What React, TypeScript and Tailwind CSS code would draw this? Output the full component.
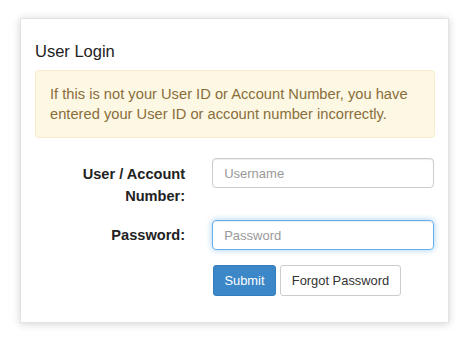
export default function App() {
  return (
    <div className="w-[474px] h-[338px] bg-white pt-[18px] pl-[20px] font-['Liberation_Sans',Arial,sans-serif]">
      <div className="w-[429px] h-[305px] bg-white border border-[#e3e3e3] shadow-[0_1px_8px_rgba(0,0,0,0.18)] px-[14px] pt-[22px]">
        <h3 className="text-[16.5px] leading-[20px] text-[#222]">User Login</h3>
        <div className="mt-[9px] w-[400px] bg-[#fcf8e3] border border-[#faebcc] rounded-[4px] px-[14px] py-[13px] text-[14.7px] leading-[20px] text-[#8a6d3b]">
          If this is not your User ID or Account Number, you have entered your User ID or account number incorrectly.
        </div>
        <div className="mt-[20px] flex flex-col text-[14.6px]">
          <div className="flex items-start">
            <label className="w-[151px] text-right font-bold leading-[22px] text-[#222] pt-[5px]">
              User / Account
              <br />
              Number:
            </label>
            <input
              className="ml-[27px] w-[223px] h-[30px] border border-[#ccc] rounded-[4px] px-[11px] text-[13px] text-[#555] placeholder:text-[#999] shadow-[inset_0_1px_1px_rgba(0,0,0,0.075)] outline-none"
              placeholder="Username"
            />
          </div>
          <div className="flex items-center mt-[13px]">
            <label className="w-[151px] text-right font-bold leading-[22px] text-[#222]">Password:</label>
            <input
              type="password"
              className="ml-[27px] w-[223px] h-[30px] border border-[#66afe9] rounded-[4px] px-[11px] text-[13px] text-[#555] placeholder:text-[#999] shadow-[inset_0_1px_1px_rgba(0,0,0,0.075),0_0_6px_rgba(102,175,233,0.6)] outline-none"
              placeholder="Password"
            />
          </div>
          <div className="flex pl-[178px] gap-[4px] mt-[15px]">
            <button className="h-[31px] w-[63px] bg-[#3b87c8] border border-[#357ebd] rounded-[3px] text-white text-[12.9px]">
              Submit
            </button>
            <button className="h-[31px] w-[121px] bg-white border border-[#ccc] rounded-[3px] text-[#333] text-[12.9px]">
              Forgot Password
            </button>
          </div>
        </div>
      </div>
    </div>
  )
}
